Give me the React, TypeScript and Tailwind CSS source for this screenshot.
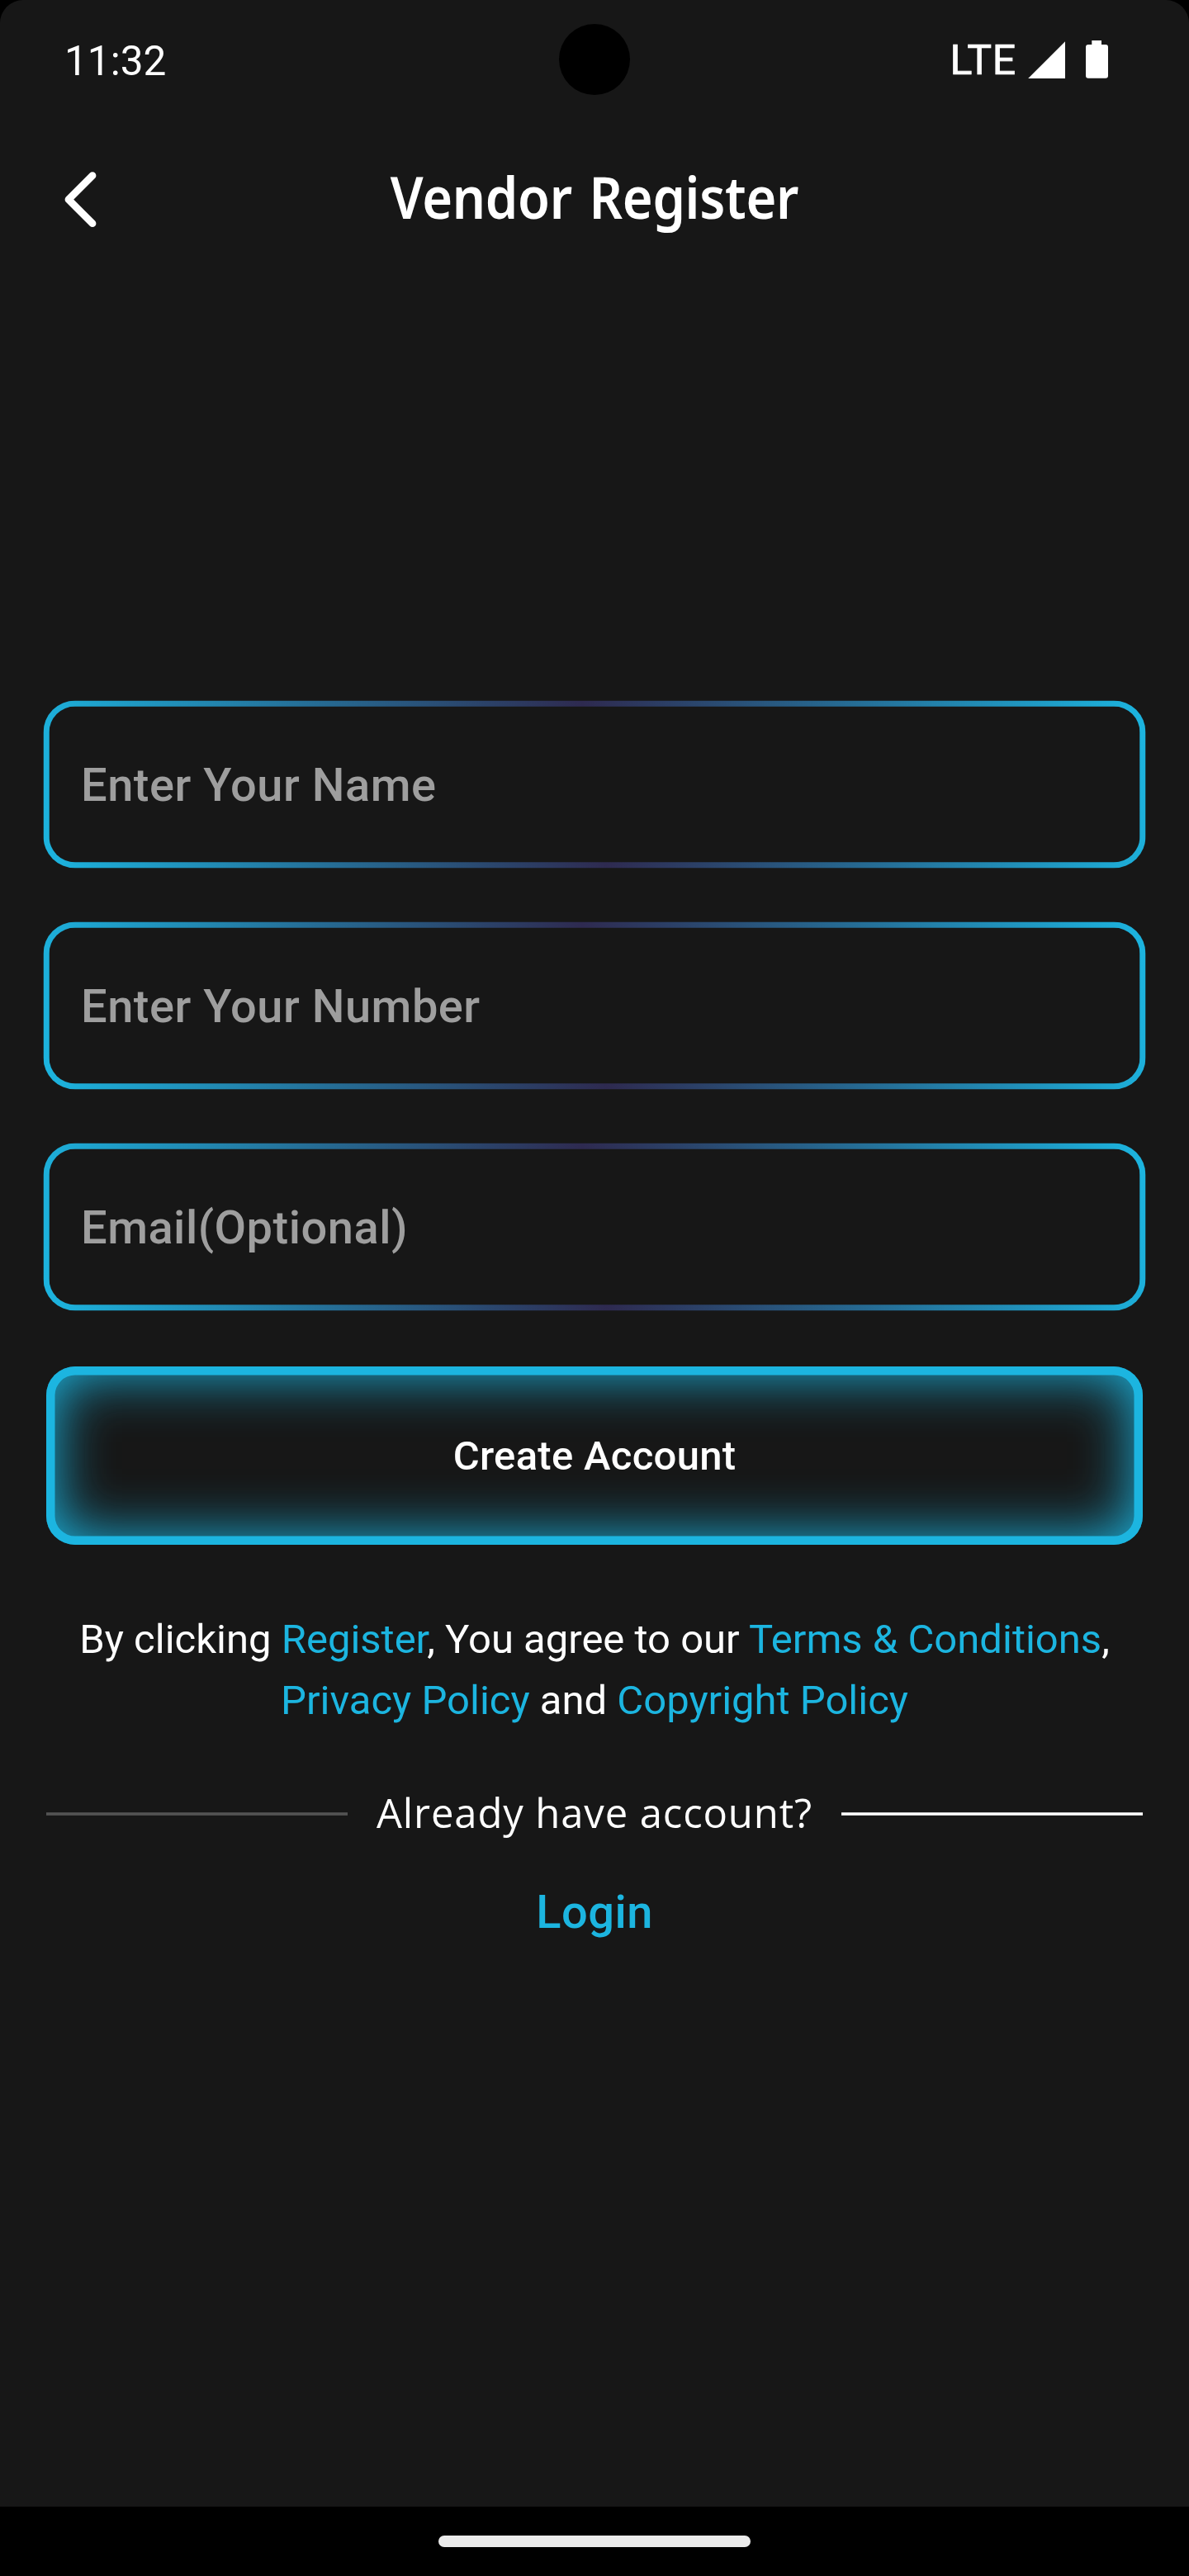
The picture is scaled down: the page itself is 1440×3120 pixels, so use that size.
import React from 'react';

const fields = [
  { name: 'name', type: 'text', placeholder: 'Enter Your Name' },
  { name: 'number', type: 'tel', placeholder: 'Enter Your Number' },
  { name: 'email', type: 'email', placeholder: 'Email(Optional)' },
];

function StatusBar() {
  return (
    <div className="grid h-[144px] shrink-0 grid-cols-[1fr_86px_1fr] items-center">
      <span className="pt-[6px] pl-[78px] text-[49.5px] leading-none font-normal">11:32</span>
      <span className="size-[86px] rounded-full bg-black" />
      <div className="flex items-center justify-end pr-[98px]">
        <span className="pt-px text-[50px] leading-none font-normal tracking-[0.7px] [-webkit-text-stroke:0.7px_white]">LTE</span>
        <svg className="ml-[14px] h-[46px] w-[45px]" viewBox="0 0 45 46" fill="white">
          <path d="M45 1.2V46H0.2Z" />
        </svg>
        <svg className="ml-[25px] h-[46px] w-[27px]" viewBox="0 0 27 46" fill="white">
          <path d="M7.3 0H19V5H24a3 3 0 0 1 3 3V42.7a3 3 0 0 1-3 3H3a3 3 0 0 1-3-3V8a3 3 0 0 1 3-3H7.3Z" />
        </svg>
      </div>
    </div>
  );
}

function Header() {
  return (
    <header className="grid h-[196px] shrink-0 grid-cols-[120px_1fr_120px] items-center px-[56px]">
      <button type="button" aria-label="Back" className="ml-[20px] h-[72px] w-[44px]">
        <svg
          className="h-[72px] w-[44px]"
          viewBox="0 0 44 72"
          fill="none"
          stroke="white"
          strokeWidth="8.8"
          strokeLinecap="round"
          strokeLinejoin="round"
        >
          <path d="M36 6.7L7 35.7L36 64.7" />
        </svg>
      </button>
      <h1 className="origin-center -translate-y-[5px] scale-x-[0.89] text-center font-['Noto_Sans',sans-serif] text-[71px] leading-none font-semibold tracking-[-0.35px] whitespace-nowrap [word-spacing:5px]">
        Vendor Register
      </h1>
    </header>
  );
}

function Link({ children }: { children: React.ReactNode }) {
  return <a className="text-[#1cb5e0]">{children}</a>;
}

export default function App() {
  return (
    <div className="flex h-[3120px] w-[1440px] flex-col bg-black font-[Roboto,sans-serif] text-white">
      <main className="flex flex-1 flex-col rounded-t-[28px] bg-[#171717]">
        <StatusBar />
        <Header />

        <form className="mt-[508px] flex flex-col">
          <div className="flex translate-x-[0.5px] translate-y-[0.5px] flex-col gap-[65px] pr-[53px] pl-[52px]">
            {fields.map((f) => (
              <div
                key={f.name}
                className="h-[203px] rounded-[38.5px] border-[7px] border-transparent [background:linear-gradient(#171717,#171717)_padding-box,linear-gradient(81.6deg,#1cb5e0,#2e2a50,#1cb5e0)_border-box]"
              >
                <input
                  name={f.name}
                  type={f.type}
                  placeholder={f.placeholder}
                  className="h-full w-full bg-transparent pl-[38.5px] text-[56px] font-medium tracking-[0.5px] outline-none placeholder:text-[#9e9e9e]"
                />
              </div>
            ))}
          </div>

          <button
            type="button"
            className="mx-[56px] mt-[68px] h-[216px] rounded-[35px] pt-[2px] text-[49px] font-medium tracking-[0.3px] shadow-[inset_0_0_0_10.5px_#1cb5e0,inset_0_0_68px_10px_#1cb5e0]"
          >
            Create Account
          </button>
        </form>

        <p className="mt-[78px] text-center text-[49px] leading-[74px]">
          By clicking <Link>Register</Link>, You agree to our <Link>Terms &amp; Conditions</Link>,
          <br />
          <Link>Privacy Policy</Link> and <Link>Copyright Policy</Link>
        </p>

        <div className="mx-[56px] mt-[64px] flex h-[72px] items-center gap-[35px]">
          <span className="h-[4px] flex-1 border-y border-[#484848] bg-[#535353]" />
          <span className="-translate-y-[2px] font-['Open_Sans',sans-serif] text-[49px] leading-none tracking-[0.875px]">
            Already have account?
          </span>
          <span className="h-[4px] flex-1 border-y border-[#cccccc] bg-white" />
        </div>

        <a className="mt-[47px] text-center text-[56px] leading-[72px] font-medium tracking-[0.5px] text-[#1cb5e0]">
          Login
        </a>
      </main>

      <nav className="flex h-[84px] shrink-0 items-start justify-center bg-black pt-[35px]">
        <span className="h-[14px] w-[378px] rounded-full bg-[#ebebeb]" />
      </nav>
    </div>
  );
}
